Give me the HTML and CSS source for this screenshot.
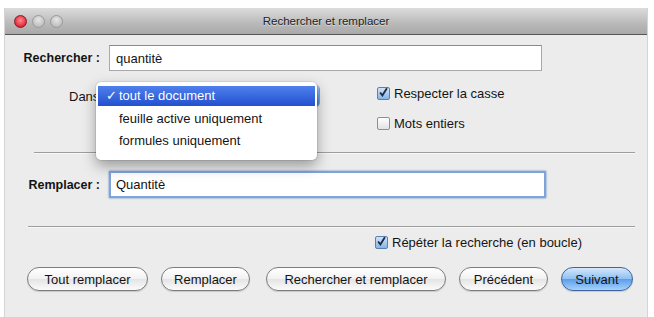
FILE: index.html
```html
<!DOCTYPE html>
<html lang="fr">
<head>
  <meta charset="UTF-8">
  <title>Rechercher et remplacer</title>
  <link rel="stylesheet" href="styles.css">
</head>
<body>
  <div class="window">
    <div class="titlebar">
      <div class="lights">
        <span class="light close"></span>
        <span class="light"></span>
        <span class="light"></span>
      </div>
      <div class="title">Rechercher et remplacer</div>
    </div>

    <div class="content">
      <div class="field-row find-row">
        <label class="field-label">Rechercher :</label>
        <div class="text-input find-input">quantitè</div>
      </div>

      <div class="options-row">
        <div class="scope">
          <span class="scope-label">Dans</span>
          <div class="popup-button"><span class="popup-arrows"></span></div>
          <ul class="popup-menu">
            <li class="selected"><span class="tick">✓</span>tout le document</li>
            <li>feuille active uniquement</li>
            <li>formules uniquement</li>
          </ul>
        </div>
        <div class="checks">
          <div class="check-line">
            <span class="checkbox checked"><svg viewBox="0 0 13 13"><path d="M2.5 6.5 L5.2 10 L10.5 1.5" /></svg></span>
            <span>Respecter la casse</span>
          </div>
          <div class="check-line">
            <span class="checkbox"></span>
            <span>Mots entiers</span>
          </div>
        </div>
      </div>

      <div class="separator sep-top"></div>

      <div class="field-row replace-row">
        <label class="field-label">Remplacer :</label>
        <div class="text-input replace-input">Quantitè</div>
      </div>

      <div class="separator sep-bottom"></div>

      <div class="loop-row">
        <div class="check-line">
          <span class="checkbox checked"><svg viewBox="0 0 13 13"><path d="M2.5 6.5 L5.2 10 L10.5 1.5" /></svg></span>
          <span>Répéter la recherche (en boucle)</span>
        </div>
      </div>

      <div class="buttons">
        <button class="btn btn-all">Tout remplacer</button>
        <button class="btn btn-replace">Remplacer</button>
        <button class="btn btn-find-replace">Rechercher et remplacer</button>
        <button class="btn btn-prev">Précédent</button>
        <button class="btn btn-next default">Suivant</button>
      </div>
    </div>
  </div>
</body>
</html>
```

FILE: styles.css
```css
* {
  box-sizing: border-box;
  margin: 0;
  padding: 0;
}

body {
  background-color: #ffffff;
  font-family: "Liberation Sans", Arial, sans-serif;
  font-size: 13px;
  color: #141414;
}

.window {
  margin: 8px 6px 0 4px;
  height: 309px;
  background-color: #ececec;
  border-left: 1px solid #d4d4d4;
  border-right: 1px solid #d4d4d4;
}

/* title bar */
.titlebar {
  height: 27px;
  display: flex;
  align-items: center;
  background: linear-gradient(#dcdcdc, #b9b9b9 60%, #a9a9a9);
  border-bottom: 1px solid #555555;
}

.lights {
  display: flex;
  gap: 5px;
  padding-left: 9px;
  width: 70px;
}

.light {
  width: 13px;
  height: 13px;
  border-radius: 50%;
  background: radial-gradient(circle at 50% 35%, #e6e6e6, #b0b0b0);
  border: 1px solid #9a9a9a;
}

.light.close {
  background: radial-gradient(circle at 50% 40%, #ff8c90, #e0283a 70%, #a31020);
  border-color: #8c1a22;
}

.title {
  flex: 1;
  text-align: center;
  margin-right: 70px;
  font-size: 11.5px;
  color: #222222;
  text-shadow: 0 1px 0 rgba(255, 255, 255, 0.5);
}

/* content */
.content {
  display: flex;
  flex-direction: column;
}

.field-row {
  display: flex;
  align-items: center;
}

.field-label {
  width: 99px;
  text-align: right;
  font-weight: bold;
  font-size: 12.5px;
  padding-right: 4px;
}

.text-input {
  background: #ffffff;
  border: 1px solid #a8a8a8;
  border-top-color: #8a8a8a;
  padding-left: 6px;
  display: flex;
  align-items: center;
}

.find-row {
  margin-top: 10px;
}

.find-input {
  width: 433px;
  height: 26px;
  margin-left: 5px;
}

.replace-row {
  margin-top: 17px;
}

.replace-input {
  width: 437px;
  height: 27px;
  margin-left: 5px;
  border: 2px solid #7fa4d9;
  box-shadow: 0 0 2px #5a86c8;
  padding-left: 5px;
}

/* options */
.options-row {
  display: flex;
  height: 67px;
  margin-top: 14px;
}

.scope {
  position: relative;
  width: 372px;
  display: flex;
  align-items: flex-start;
}

.scope-label {
  margin-left: 64px;
  margin-top: 4px;
}

.popup-button {
  width: 219px;
  height: 22px;
  margin-left: 2px;
  background: linear-gradient(#ffffff, #eaeaea);
  border: 1px solid #9c9c9c;
  border-radius: 4px;
  display: flex;
  justify-content: flex-end;
}

.popup-arrows {
  width: 16px;
  height: 100%;
  background: linear-gradient(#9cc3f2, #3f7fd8);
  border-radius: 0 3px 3px 0;
}

.popup-menu {
  position: absolute;
  left: 91px;
  top: -3px;
  width: 221px;
  padding: 4px 0 8px;
  list-style: none;
  background: #ffffff;
  border-radius: 5px;
  box-shadow: 0 6px 14px rgba(0, 0, 0, 0.35), 0 0 0 1px rgba(0, 0, 0, 0.08);
}

.popup-menu li {
  height: 22px;
  line-height: 22px;
  padding-left: 23px;
  position: relative;
  color: #141414;
}

.popup-menu li.selected {
  height: 20px;
  line-height: 20px;
  margin: 0 2px 2px;
  padding-left: 21px;
  background: linear-gradient(#4f80ec, #2250d0);
  color: #ffffff;
}

.tick {
  position: absolute;
  left: 8px;
}

.checks {
  display: flex;
  flex-direction: column;
  gap: 14px;
}

.check-line {
  display: flex;
  align-items: center;
  gap: 4px;
  height: 16px;
}

.checkbox {
  width: 13px;
  height: 13px;
  border: 1px solid #8f8f8f;
  border-radius: 2px;
  background: linear-gradient(#ffffff, #e2e2e2);
  display: inline-flex;
}

.checkbox.checked {
  background: linear-gradient(#cfe3f8, #86b4e8);
  border-color: #5d7fae;
}

.checkbox svg {
  width: 13px;
  height: 13px;
  margin: -2px 0 0 0;
  fill: none;
  stroke: #1d2a44;
  stroke-width: 2.2;
}

/* separators */
.separator {
  height: 1px;
  background: #9e9e9e;
  border-bottom: 1px solid #f8f8f8;
  box-sizing: content-box;
}

.sep-top {
  margin: 0 12px 0 29px;
}

.sep-bottom {
  margin: 28px 12px 0 23px;
}

.loop-row {
  margin-top: 6px;
  padding-left: 370px;
}

/* buttons */
.buttons {
  display: flex;
  gap: 13px;
  margin-top: 17px;
  padding-left: 22px;
}

.btn {
  height: 24px;
  border-radius: 12px;
  border: 1px solid #7c7c7c;
  background: linear-gradient(#ffffff, #f1f1f1 50%, #e4e4e4 51%, #fbfbfb);
  box-shadow: 0 1px 1px rgba(0, 0, 0, 0.15);
  font-family: "Liberation Sans", Arial, sans-serif;
  font-size: 13px;
  color: #141414;
}

.btn-all { width: 121px; }
.btn-replace { width: 89px; }
.btn-find-replace { width: 180px; margin-left: 3px; }
.btn-prev { width: 89px; }
.btn-next { width: 72px; }

.btn.default {
  border-color: #3f64a0;
  background: linear-gradient(#d4e7fb, #8ec0f3 50%, #5a9deb 51%, #a6d2fb);
}
```
